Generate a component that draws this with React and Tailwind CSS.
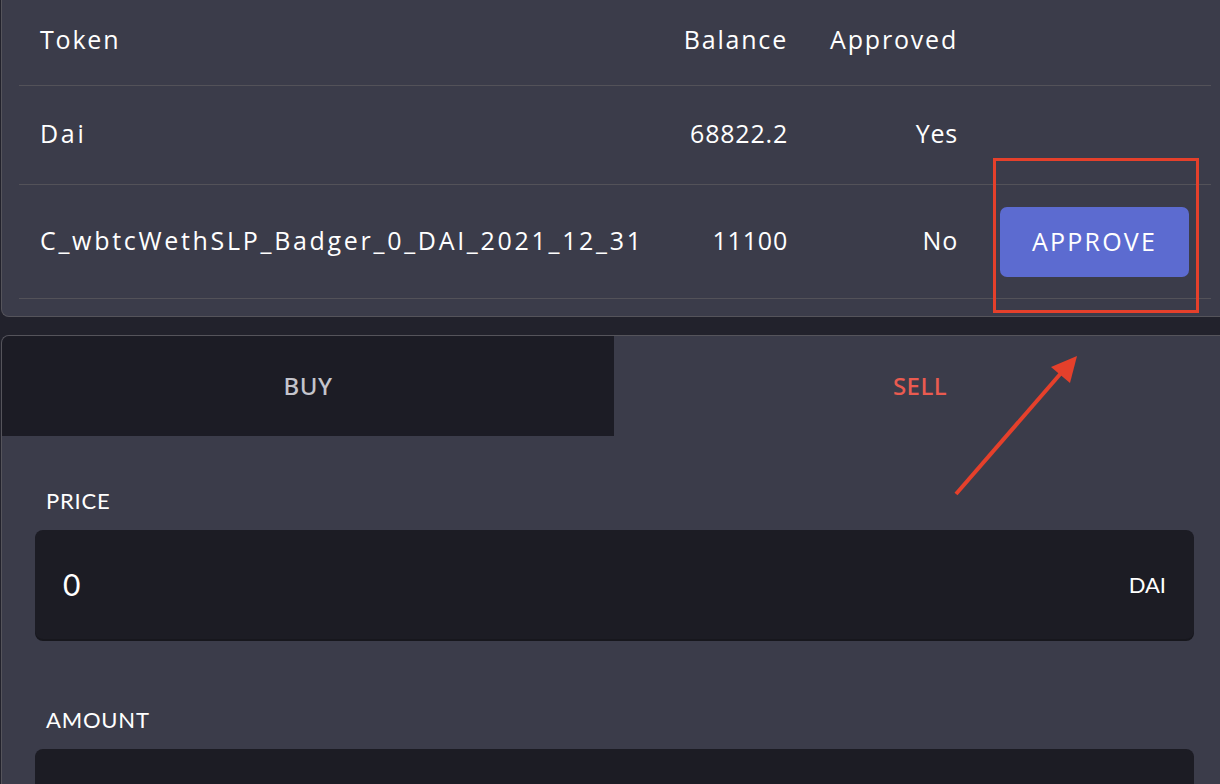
import React from 'react'

const rows = [
  { token: 'Dai', balance: '68822.2', approved: 'Yes' },
  { token: 'C_wbtcWethSLP_Badger_0_DAI_2021_12_31', balance: '11100', approved: 'No', action: true },
]

const font = { fontFamily: 'Lato, "Open Sans", sans-serif' }
const tableFont = { fontFamily: '"Open Sans", Lato, sans-serif' }

function Field({ label, value, unit }) {
  return (
    <div className="flex flex-col">
      <div className="h-[60px] flex items-center pl-[11px] text-[22px] text-white tracking-[0.8px]">{label}</div>
      <div className="w-[1159px] h-[109px] rounded-[8px] bg-[#1c1c24] shadow-[0_2px_0_#17171d] flex items-center justify-between pl-[28px] pr-[28px]">
        <span className="text-[30px] text-white">{value}</span>
        <span className="text-[22px] text-white">{unit}</span>
      </div>
    </div>
  )
}

export default function App() {
  return (
    <div className="relative w-[1220px] h-[784px] overflow-hidden bg-[#22222c]" style={font}>
      {/* Token table */}
      <div className="ml-px w-[1240px] h-[317px] bg-[#3b3c4a] border-l border-b border-[#55545b] rounded-bl-[8px] pl-[17px]" style={tableFont}>
        <div className="w-[1192px]">
          <div className="grid grid-cols-[643px_147px_170px_232px] h-[86px] items-center border-b border-[#535259] text-[25px] tracking-[1.8px] text-white">
            <div className="px-[21px] pb-[6px]">Token</div>
            <div className="px-[21px] pb-[6px] text-right">Balance</div>
            <div className="px-[21px] pb-[6px] text-right">Approved</div>
            <div />
          </div>
          {rows.map((r) => (
            <div
              key={r.token}
              className={`grid grid-cols-[643px_147px_170px_232px] items-center border-b border-[#535259] text-[25px] tracking-[0.8px] text-white ${r.action ? 'h-[114px]' : 'h-[99px]'}`}
            >
              <div className="px-[21px] pb-[2px] whitespace-nowrap tracking-[2.7px]">{r.token}</div>
              <div className="px-[21px] pb-[2px] text-right">{r.balance}</div>
              <div className="px-[21px] pb-[2px] text-right">{r.approved}</div>
              <div className="px-[21px]">
                {r.action && (
                  <button className="w-[189px] h-[70px] rounded-[7px] bg-[#5c6bd0] text-white text-[25px] tracking-[2.2px]">
                    APPROVE
                  </button>
                )}
              </div>
            </div>
          ))}
        </div>
      </div>

      {/* Buy / sell panel */}
      <div className="ml-px mt-[18px] w-[1240px] h-[460px] bg-[#3b3c4a] border-l border-t border-[#55545b] rounded-tl-[8px] overflow-hidden">
        <div className="flex h-[100px]" style={{ fontFamily: '"Noto Sans", "Open Sans", sans-serif' }}>
          <div className="w-[612px] bg-[#1c1c25] flex items-center justify-center text-[24px] font-medium text-[#c4c4cc] tracking-[0.5px]">
            BUY
          </div>
          <div className="w-[612px] flex items-center justify-center text-[24px] font-medium text-[#ea5b50] tracking-[0.5px]">
            SELL
          </div>
        </div>
        <div className="pl-[33px] pt-[34px] flex flex-col gap-[50px]">
          <Field label="PRICE" value="0" unit="DAI" />
          <Field label="AMOUNT" value="" unit="" />
        </div>
      </div>

      {/* Annotation */}
      <div className="absolute left-[993px] top-[158px] w-[206px] h-[155px] border-[3px] border-[#e5402b]" />
      <svg className="absolute left-0 top-0" width="1220" height="784" viewBox="0 0 1220 784">
        <line x1="956" y1="494" x2="1062" y2="372" stroke="#e5402b" strokeWidth="4" />
        <polygon points="1077,356 1051,367 1070,383" fill="#e5402b" />
      </svg>
    </div>
  )
}
